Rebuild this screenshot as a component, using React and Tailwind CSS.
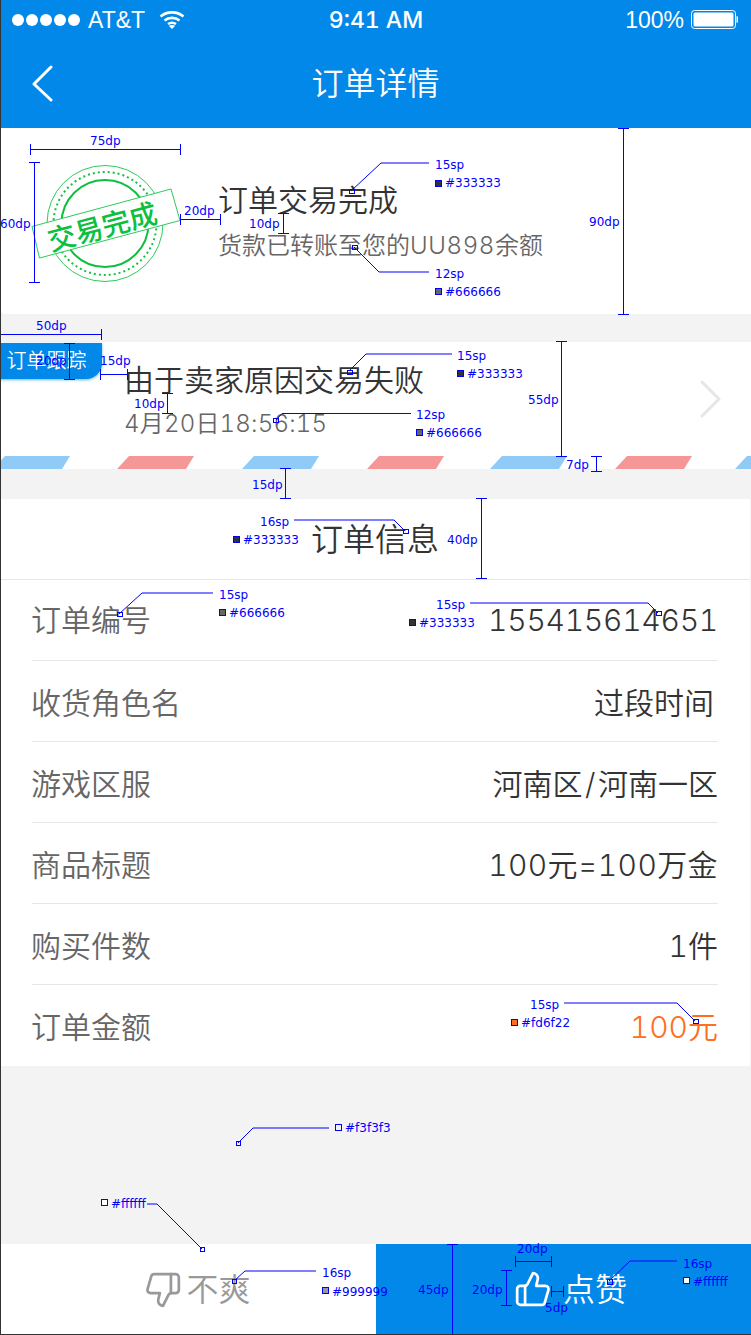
import React from "react";
import { ThumbsUp, ThumbsDown } from "lucide-react";

const hLines = [
  [30, 180, 149], [180, 220, 219], [0, 101, 334], [100, 127, 374], [515, 551, 1261], [551, 563, 1291],
];
const vLines = [
  [34, 162, 282], [283, 213, 233], [623, 128, 314], [69.5, 343, 379], [167.5, 393, 413], [561, 341, 456],
  [596.5, 456, 471], [285, 468, 498], [481.5, 498, 578], [452, 1244, 1334], [506, 1270, 1305],
];
const leaders = [
  "351,191 381,163 429,163", "354,247 379,272 429,272", "349,371 366,354 452,354", "276,420 282,413.5 411,413.5",
  "294,520 394,520 405,531", "119,614 142,593 213,593", "470,603 648,603 658,613", "564,1003 677,1003 695,1021",
  "238,1143 253,1128 329,1128", "147,1204 157,1204 202,1249", "235,1280 245,1271 316,1271", "609,1281 630,1261 677,1261",
];
const anchors = [
  [349, 189, 5, 4], [352, 245, 5, 4], [347, 370, 5, 4], [273, 418, 5, 4], [403, 529, 5, 4], [117, 612, 5, 4], [656, 611, 5, 4],
  [693, 1019, 5, 4], [236, 1141, 4, 4], [200, 1247, 4, 4], [232, 1279, 4, 4], [607, 1279, 5, 5],
];
const swatches = [
  [435, 180, "#333333"], [435, 288, "#666666"], [457, 370, "#333333"], [416, 429, "#666666"], [233, 536, "#333333"],
  [219, 609, "#666666"], [409, 619, "#333333"], [511, 1019, "#fd6f22"], [335, 1124, "#f3f3f3"], [101, 1199, "#ffffff"],
  [322, 1287, "#999999"], [683, 1277, "#ffffff"],
];

function Overlay() {
  return (
    <svg className="absolute left-0 top-0 pointer-events-none" width="751" height="1335" fill="none" stroke="#0000ff" strokeWidth="1" shapeRendering="crispEdges">
      {hLines.map(([a, b, y], i) => (
        <g key={i}>
          <path d={`M${a} ${y + 0.5}H${b}`} />
          <path d={`M${a + 0.5} ${y - 5}v11M${b + 0.5} ${y - 5}v11`} />
        </g>
      ))}
      {vLines.map(([x, a, b], i) => (
        <g key={i}>
          <path d={`M${x} ${a}V${b}`} />
          <path d={`M${x - 5.5} ${a + 0.5}h11M${x - 5.5} ${b + 0.5}h11`} />
        </g>
      ))}
      {leaders.map((p, i) => (
        <polyline key={i} points={p} shapeRendering="auto" />
      ))}
      {anchors.map(([x, y, w, h], i) => (
        <rect key={i} x={x + 0.5} y={y + 0.5} width={w} height={h} />
      ))}
      {swatches.map(([x, y, c], i) => (
        <rect key={i} x={x + 0.5} y={y + 0.5} width="6" height="6" fill={c} />
      ))}
    </svg>
  );
}

const lab = "absolute text-[12px] leading-[14px] text-[#0000ff] font-['DejaVu_Sans',sans-serif] font-normal whitespace-nowrap";

function Labels() {
  return (
    <>
      <span className={`${lab} left-[90px] top-[134px]`}>75dp</span>
      <span className={`${lab} left-[0px] top-[217px]`}>60dp</span>
      <span className={`${lab} left-[184px] top-[204px]`}>20dp</span>
      <span className={`${lab} left-[249px] top-[217px]`}>10dp</span>
      <span className={`${lab} left-[435px] top-[158px]`}>15sp</span>
      <span className={`${lab} left-[445px] top-[176px]`}>#333333</span>
      <span className={`${lab} left-[435px] top-[267px]`}>12sp</span>
      <span className={`${lab} left-[445px] top-[285px]`}>#666666</span>
      <span className={`${lab} left-[589px] top-[215px]`}>90dp</span>
      <span className={`${lab} left-[36px] top-[319px]`}>50dp</span>
      <span className={`${lab} left-[36px] top-[354px]`}>20dp</span>
      <span className={`${lab} left-[100px] top-[354px]`}>15dp</span>
      <span className={`${lab} left-[134px] top-[397px]`}>10dp</span>
      <span className={`${lab} left-[457px] top-[349px]`}>15sp</span>
      <span className={`${lab} left-[467px] top-[367px]`}>#333333</span>
      <span className={`${lab} left-[416px] top-[408px]`}>12sp</span>
      <span className={`${lab} left-[426px] top-[426px]`}>#666666</span>
      <span className={`${lab} left-[528px] top-[393px]`}>55dp</span>
      <span className={`${lab} left-[566px] top-[458px]`}>7dp</span>
      <span className={`${lab} left-[252px] top-[478px]`}>15dp</span>
      <span className={`${lab} left-[260px] top-[515px]`}>16sp</span>
      <span className={`${lab} left-[243px] top-[533px]`}>#333333</span>
      <span className={`${lab} left-[447px] top-[533px]`}>40dp</span>
      <span className={`${lab} left-[219px] top-[588px]`}>15sp</span>
      <span className={`${lab} left-[229px] top-[606px]`}>#666666</span>
      <span className={`${lab} left-[436px] top-[598px]`}>15sp</span>
      <span className={`${lab} left-[419px] top-[616px]`}>#333333</span>
      <span className={`${lab} left-[530px] top-[998px]`}>15sp</span>
      <span className={`${lab} left-[521px] top-[1016px]`}>#fd6f22</span>
      <span className={`${lab} left-[345px] top-[1121px]`}>#f3f3f3</span>
      <span className={`${lab} left-[111px] top-[1197px]`}>#ffffff</span>
      <span className={`${lab} left-[322px] top-[1266px]`}>16sp</span>
      <span className={`${lab} left-[332px] top-[1285px]`}>#999999</span>
      <span className={`${lab} left-[418px] top-[1283px]`}>45dp</span>
      <span className={`${lab} left-[517px] top-[1242px]`}>20dp</span>
      <span className={`${lab} left-[472px] top-[1283px]`}>20dp</span>
      <span className={`${lab} left-[545px] top-[1301px]`}>5dp</span>
      <span className={`${lab} left-[683px] top-[1257px]`}>16sp</span>
      <span className={`${lab} left-[693px] top-[1275px]`}>#ffffff</span>
    </>
  );
}

function Stamp() {
  return (
    <svg className="shrink-0" width="160" height="120" viewBox="30 163 160 120" fill="none">
      <circle cx="105" cy="223.5" r="58" stroke="#2ecb58" strokeWidth="1" />
      <circle cx="105" cy="223.5" r="51.5" stroke="#14c044" strokeWidth="2" strokeDasharray="2 3" />
      <circle cx="105" cy="223.5" r="43.5" stroke="#0dbf3f" strokeWidth="2" />
      <polygon points="32,226.5 171,189 180,220.5 39.5,258" fill="#fff" stroke="#2ecb58" strokeWidth="1" />
      <text x="102.5" y="237" textAnchor="middle" transform="rotate(-15 102.5 227)" fontSize="28" fontWeight="500" fill="#0dbf3f" fontFamily="'Noto Sans CJK SC', sans-serif">交易完成</text>
    </svg>
  );
}

function Stripes() {
  const blue = [-8, 241, 489, 734];
  const red = [116, 366, 614];
  const shape = (x) => `${x},13 ${x + 12},0 ${x + 77},0 ${x + 69},13`;
  return (
    <svg className="block bg-white" width="750" height="13">
      {blue.map((x) => <polygon key={x} points={shape(x)} fill="#90caf7" />)}
      {red.map((x) => <polygon key={x} points={shape(x)} fill="#f59797" />)}
    </svg>
  );
}

function Row({ label, value, valueClass = "text-[#333333]", nudge = "pt-[4px]" }) {
  return (
    <div className={`flex h-[81px] items-center justify-between border-b border-[#e6e6e6] last:border-b-0 ${nudge}`}>
      <span className="-ml-[1px] text-[30px] leading-[40px] text-[#666666]">{label}</span>
      <span className={`text-[30px] leading-[40px] ${valueClass}`}>{value}</span>
    </div>
  );
}

export default function App() {
  return (
    <div className="relative h-[1335px] w-[751px] overflow-hidden border-b border-l border-[#333333] bg-[#f3f3f3] font-['Inter','Noto_Sans_CJK_SC',sans-serif] font-[350] tabular-nums">
      <header className="h-[128px] bg-[#0288e8] text-white">
        <div className="grid h-[40px] grid-cols-3 items-center font-['Liberation_Sans',sans-serif] font-normal">
          <div className="flex items-center">
            <div className="ml-[11px] flex gap-[2px]">
              {[0, 1, 2, 3, 4].map((i) => <span key={i} className="h-[12px] w-[12px] rounded-full bg-white" />)}
            </div>
            <span className="ml-[8px] text-[23px] leading-[28px]">AT&amp;T</span>
            <svg className="ml-[14px]" width="26" height="20" viewBox="0 0 26 20" fill="none" stroke="#fff" strokeWidth="2.6">
              <path d="M1.500 6.500C8 1 18 1 24.500 6.500" />
              <path d="M5.500 10.500C9.800 7 16.200 7 20.500 10.500" />
              <path d="M9 14C11.500 12.400 14.500 12.400 17 14" />
              <path d="M13 19L9.800 15.800C11.800 14.700 14.200 14.700 16.200 15.800Z" fill="#fff" stroke="none" />
            </svg>
          </div>
          <span className="text-center font-['Inter',sans-serif] text-[23px] font-medium leading-[28px]">9:41 AM</span>
          <div className="flex items-center justify-end">
            <span className="text-[23px] leading-[28px]">100%</span>
            <svg className="ml-[7px] mr-[13px]" width="47" height="20" viewBox="0 0 47 20">
              <rect x="0.5" y="0.5" width="44" height="18" rx="3" fill="none" stroke="#fff" />
              <rect x="2.5" y="2.5" width="40" height="14" rx="1.5" fill="#fff" />
              <path d="M46 6.500c1 .5 1 5.500 0 6z" fill="#fff" stroke="#fff" />
            </svg>
          </div>
        </div>
        <div className="relative flex h-[88px] items-center justify-center">
          <svg className="absolute left-[30px] top-[25px]" width="24" height="38" viewBox="0 0 24 38" fill="none" stroke="#fff" strokeWidth="3" strokeLinecap="round" strokeLinejoin="round">
            <path d="M20 2L3 19L20 35" />
          </svg>
          <span className="mr-[1px] text-[32px] leading-[40px]">订单详情</span>
        </div>
      </header>

      <section className="flex h-[186px] rounded-bl-[4px] bg-white pl-[29px] pt-[35px]">
        <Stamp />
        <div className="ml-[28px] mt-[17px]">
          <div className="text-[30px] leading-[40px] text-[#333333]">订单交易完成</div>
          <div className="mt-[6px] text-[24px] leading-[40px] text-[#666666]">货款已转账至您的<span className="tracking-[0.6px]">UU898</span>余额</div>
        </div>
      </section>

      <section className="relative mt-[28px]">
        <div className="flex h-[114px] items-center justify-between bg-white pl-[123px] pr-[29px]">
          <div className="pt-[5px]">
            <div className="text-[30px] leading-[40px] text-[#333333]">由于卖家原因交易失败</div>
            <div className="mt-[4px] text-[24px] leading-[40px] tracking-[0.2px] text-[#666666]">4月20日18:56:15</div>
          </div>
          <svg width="22" height="38" viewBox="0 0 22 38" fill="none" stroke="#e6e6e6" strokeWidth="3" strokeLinecap="round" strokeLinejoin="round">
            <path d="M2 2L19 19L2 36" />
          </svg>
        </div>
        <Stripes />
        <div className="absolute left-[-1px] top-[1px] flex h-[36px] w-[102px] items-center justify-center rounded-br-[16px] bg-[#0288e8] pr-[9px] text-[20px] text-white shadow-[0_1px_3px_rgba(2,136,232,0.6)]">
          订单跟踪
        </div>
      </section>

      <section className="mr-[1px] mt-[30px] flex h-[81px] items-center justify-center border-b border-[#e6e6e6] bg-white pr-[1px] pt-[1px] text-[32px] text-[#333333]">
        订单信息
      </section>

      <section className="mr-[1px] h-[486px] bg-white pl-[31px] pr-[32px]">
        <Row label="订单编号" nudge="pb-[1px]" value={<span className="tracking-[-0.25px]">155415614651</span>} />
        <Row label="收货角色名" value={<span className="mr-[4px]">过段时间</span>} />
        <Row label="游戏区服" value={<span>河南区<span className="mx-[2.5px]">/</span>河南一区</span>} />
        <Row label="商品标题" value={<span className="tracking-[0.4px]">100元=100万金</span>} />
        <Row label="购买件数" value="1件" />
        <Row label="订单金额" nudge="pt-[2px]" value="100元" valueClass="text-[#fd6f22]" />
      </section>

      <footer className="mt-[178px] flex h-[90px]">
        <div className="flex w-[375px] items-center justify-center bg-white pl-[18px] text-[32px] text-[#999999]">
          <ThumbsDown size={38} strokeWidth={1.7} className="mr-[4px] mt-[2px]" />
          <span className="pt-[2px]">不爽</span>
        </div>
        <div className="flex flex-1 items-center justify-center bg-[#0288e8] pl-[14px] text-[32px] text-white">
          <ThumbsUp size={38} strokeWidth={1.7} className="mr-[11px]" />
          <span className="pt-[2px]">点赞</span>
        </div>
      </footer>

      <div className="absolute left-[-1px] top-0 h-[1335px] w-[751px]">
        <Overlay />
        <Labels />
      </div>
    </div>
  );
}
